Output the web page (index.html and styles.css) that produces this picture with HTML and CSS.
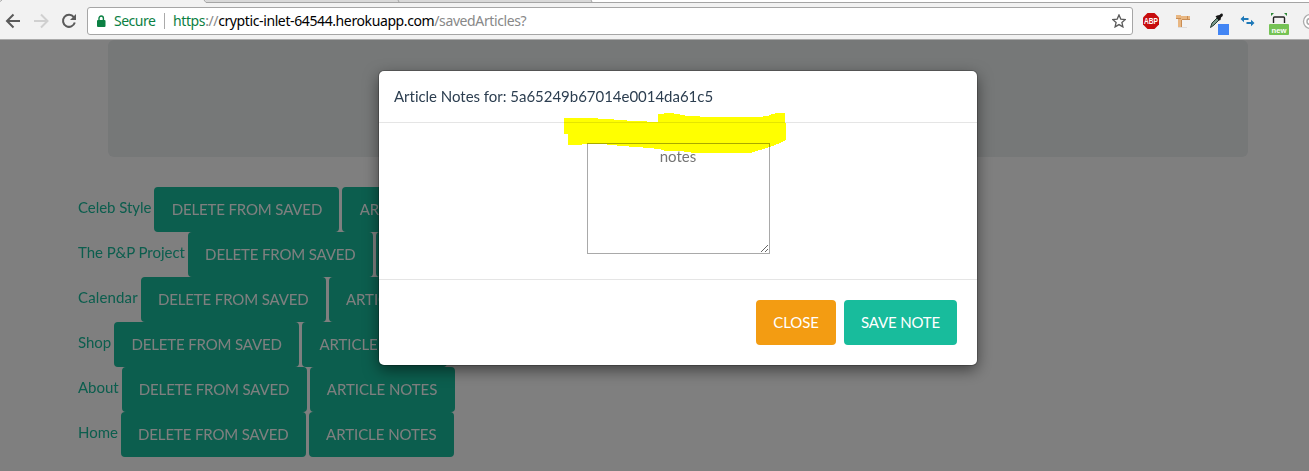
FILE: index.html
```html
<!DOCTYPE html>
<html lang="en">
<head>
<meta charset="utf-8">
<title>Saved Articles</title>
<link rel="stylesheet" href="styles.css">
</head>
<body>
<header class="browser">
  <svg class="tabs" width="1309" height="4" viewBox="0 0 1309 4">
    <path d="M0 0H1309V2H592L591 0Z" fill="#fff"/>
    <path d="M205 0H591L592 2H206Z" fill="#d9d9d9"/>
    <path d="M0 0H204L206 2.5H0Z" fill="#f2f2f2"/>
    <path d="M0 1.5L2 0M204 0L206 2.5H1309M398 0L399 2M591 0L592 2" fill="none" stroke="#a5a5a5"/>
  </svg>
  <div class="toolbar">
    <svg class="nav" width="87" height="34" viewBox="0 4 87 34" fill="none" stroke-width="2">
      <path d="M20 21H7.5M13.5 14.5L7 21L13.5 27.5" stroke="#5a5a5a"/>
      <path d="M34 21H47M41 14.5L47.5 21L41 27.5" stroke="#d0d0d0"/>
      <path d="M73.8 17.2A6 6 0 1 0 74.8 22.5" stroke="#5a5a5a"/>
      <path d="M76 14V20H70Z" fill="#5a5a5a"/>
    </svg>
    <div class="address">
      <svg class="lock" width="10" height="12" viewBox="0 0 10 12"><rect x="1" y="5" width="8.5" height="7" rx="1" fill="#0b8043"/><path d="M3 5V3.2a2.2 2.2 0 0 1 4.4 0V5" fill="none" stroke="#0b8043" stroke-width="1.4"/></svg>
      <span class="secure">Secure</span>
      <span class="rule"></span>
      <span class="url"><span class="scheme">https</span><span class="dim">://</span>cryptic-inlet-64544.herokuapp.com<span class="dim">/savedArticles?</span></span>
      <svg class="star" width="14" height="14" viewBox="0 0 14 14"><path d="M7 .9L8.8 5.1L13.3 5.5L9.9 8.5L10.9 12.9L7 10.6L3.1 12.9L4.1 8.5L.7 5.5L5.2 5.1Z" fill="none" stroke="#5a5a5a" stroke-width="1.3"/></svg>
    </div>
    <svg class="extensions" width="176" height="34" viewBox="1133 4 176 34">
      <path d="M1147.5 13H1154.5L1159 17.5V24.5L1154.5 29H1147.5L1143 24.5V17.5Z" fill="#c70d0d"/>
      <text x="1151" y="24" class="abp" text-anchor="middle" textLength="14" lengthAdjust="spacingAndGlyphs">ABP</text>
      <path d="M1178 27.5H1187" stroke="#ddd"/>
      <path d="M1176 15H1181V16H1190V20H1182V27H1178V19H1176Z" fill="#e9b782"/>
      <path d="M1182 19.5H1190M1181.5 20V27M1187.5 16V20M1176 18.5H1181" stroke="#c88d55" fill="none"/>
      <path d="M1210.5 27.5L1212 23L1217 18L1219 20L1214 25Z" fill="#78998a" stroke="#263c33"/>
      <path d="M1215.5 16.5L1217 15.5L1219.5 15Q1222 12.5 1222.8 14.2T1221 17.5L1220.5 20L1219 20.5Z" fill="#171717"/>
      <rect x="1218" y="24" width="11" height="11" fill="#4285f4"/>
      <path d="M1240.5 19L1244 15.8V18H1248.5V20H1244V22.2ZM1254.5 23L1251 19.8V22H1246.5V24H1251V26.2Z" fill="#1d78b8"/>
      <path d="M1273.5 23V18Q1273.5 17 1274.5 17H1283.5Q1284.5 17 1284.5 18V23" fill="none" stroke="#222" stroke-width="1.4"/>
      <path d="M1271 13H1274L1271 16ZM1287 13H1284L1287 16Z" fill="#2d8937"/>
      <rect x="1269" y="24" width="20" height="11" rx="1" fill="#75c355"/>
      <text x="1279" y="32.8" class="new" text-anchor="middle" textLength="15" lengthAdjust="spacingAndGlyphs">new</text>
      <circle cx="1310.5" cy="21.5" r="7" fill="#fff" stroke="#aaa" stroke-width="1.3"/>
      <path d="M1310 18.5A3 3 0 0 0 1310 24.5" fill="none" stroke="#aaa" stroke-width="1.5"/>
    </svg>
  </div>
</header>
<main class="page">
  <div class="jumbotron"></div>
  <div class="articles">
    <div class="article"><a class="name">Celeb Style</a> <button class="btn delete">DELETE FROM SAVED</button> <button class="btn notes">ARTICLE NOTES</button></div>
    <div class="article"><a class="name">The P&amp;P Project</a> <button class="btn delete">DELETE FROM SAVED</button> <button class="btn notes">ARTICLE NOTES</button></div>
    <div class="article"><a class="name wide">Calendar</a> <button class="btn delete">DELETE FROM SAVED</button> <button class="btn notes">ARTICLE NOTES</button></div>
    <div class="article"><a class="name">Shop</a> <button class="btn delete">DELETE FROM SAVED</button> <button class="btn notes">ARTICLE NOTES</button></div>
    <div class="article"><a class="name">About</a> <button class="btn delete">DELETE FROM SAVED</button> <button class="btn notes">ARTICLE NOTES</button></div>
    <div class="article"><a class="name">Home</a> <button class="btn delete">DELETE FROM SAVED</button> <button class="btn notes">ARTICLE NOTES</button></div>
  </div>
  <div class="backdrop">
    <section class="modal">
      <div class="modal-header">Article Notes for: 5a65249b67014e0014da61c5</div>
      <div class="modal-body"><textarea class="note" placeholder="notes"></textarea></div>
      <div class="modal-footer"><button class="btn warning">CLOSE</button><button class="btn save">SAVE NOTE</button></div>
      <svg class="marker" width="222" height="40" viewBox="564 113 222 40" shape-rendering="crispEdges"><path d="M564 118H598V119H614V120H627V121H647V122H658V114H664V113H674V114H680V115H685V116H700V117H763V116H769V115H771V114H775V113H785V123H786V140L780 143L770 147L760 150L750 153H695L680 151H664V150L650 148L635 147L622 146L602 144H582V145H568V134H564Z" fill="#ff0"/></svg>
    </section>
  </div>
</main>
</body>
</html>
```
FILE: styles.css
```css
* { box-sizing: border-box; }
body {
  margin: 0;
  height: 471px;
  overflow: hidden;
  display: flex;
  flex-direction: column;
  font: 15px/21px Lato, sans-serif;
  color: #2c3e50;
}
svg { display: block; flex: none; }
.browser {
  height: 40px;
  flex: none;
  background: #f2f2f2;
  border-bottom: 1px solid #aaa;
}
.toolbar { display: flex; height: 34px; }
.address {
  width: 1046px;
  height: 28px;
  margin-top: 3px;
  padding: 0 6px 0 8px;
  display: flex;
  align-items: center;
  background: #fff;
  border: 1px solid #a6a6a6;
  border-radius: 3px;
  font: 14px/20px "Noto Sans", sans-serif;
  color: #000;
  white-space: nowrap;
}
.secure { width: 50px; margin-left: 8px; color: #0b8043; letter-spacing: -.5px; }
.rule { width: 1px; height: 16px; margin-right: 8px; background: #aaa; }
.url { letter-spacing: -.39px; }
.scheme { color: #0b8043; }
.dim { color: #888; }
.star { margin-left: auto; }
.abp { font: bold 8.5px "Liberation Sans", sans-serif; fill: #fff; }
.new { font: bold 8px "Liberation Sans", sans-serif; fill: #fff; }
.page { position: relative; flex: 1; overflow: hidden; }
.jumbotron {
  width: 1140px;
  height: 117px;
  margin: 0 0 30px 108px;
  background: #ecf0f1;
  border-radius: 6px;
}
.articles { padding-left: 78px; }
.article { display: flex; gap: 3px; height: 45px; white-space: nowrap; }
.name { padding-top: 10px; color: #18bc9c; letter-spacing: -.04px; }
.name.wide { letter-spacing: .14px; }
.btn {
  height: 45px;
  padding: 10px 0;
  border: 2px solid #18bc9c;
  border-radius: 4px;
  background: #18bc9c;
  color: #fff;
  font: 15px/21px Lato, sans-serif;
  letter-spacing: -.14px;
}
.delete { width: 185px; }
.notes { width: 145px; letter-spacing: -.05px; }
.save { width: 113px; }
.warning { width: 80px; background: #f39c12; border-color: #f39c12; }
.backdrop {
  position: absolute;
  inset: 0;
  padding: 31px 0 0 379px;
  background: rgba(0, 0, 0, .5);
}
.modal {
  position: relative;
  width: 598px;
  height: 294px;
  background: #fff;
  border-radius: 5px;
  box-shadow: 0 0 0 1px rgba(0, 0, 0, .2), 0 5px 15px rgba(0, 0, 0, .5);
}
.modal-header { height: 52px; padding: 15px; border-bottom: 1px solid #e5e5e5; letter-spacing: -.025px; }
.modal-body { height: 156px; padding-top: 20px; display: flex; justify-content: center; align-items: flex-start; }
.note {
  width: 183px;
  height: 111px;
  padding: 2px;
  border: 1px solid #a9a9a9;
  border-radius: 0;
  text-align: center;
  font: 15px/21px Lato, sans-serif;
}
.note::placeholder { color: #757575; }
.modal-footer { display: flex; justify-content: flex-end; gap: 8px; padding: 20px; border-top: 1px solid #e5e5e5; }
.marker { position: absolute; left: 185px; top: 42px; mix-blend-mode: multiply; }
```
